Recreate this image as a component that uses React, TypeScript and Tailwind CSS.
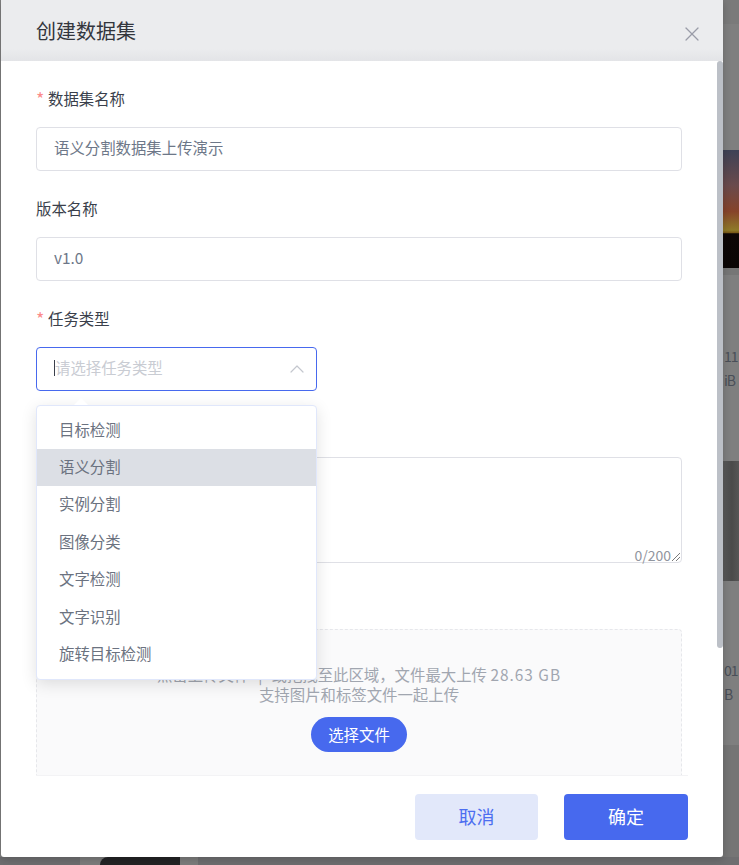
import { X, ChevronUp } from 'lucide-react';

const taskTypes = ['目标检测', '语义分割', '实例分割', '图像分类', '文字检测', '文字识别', '旋转目标检测'];

const Label = ({ text, required }: { text?: string; required?: boolean }) => (
  <div className="flex h-[22px] items-center pb-[2px] text-[15.4px] leading-[20px] text-[#3a3f4b]">
    {required && <span className="mr-[4px] w-[8px] text-[18px] text-[#fb8c8c]">*</span>}
    {text}
  </div>
);

const Field = ({ value }: { value: string }) => (
  <div className="mt-[17px] flex h-[44px] items-center rounded border border-[#dfe0e6] bg-white px-[17px] pb-[2px] text-[15.4px] text-[#6d7788]">
    {value}
  </div>
);

// the dimmed page behind the dialog, only its right and bottom edges show
const Backdrop = () => (
  <div className="absolute inset-0 bg-[#7f7f7f] text-sm leading-[22px] text-[#4a4f58]">
    <div className="ml-[723px] flex h-full flex-col">
      <div className="h-[24px] shrink-0 bg-[#7a7a7a]" />
      <div className="h-[126px] shrink-0" />
      <div className="h-[118px] shrink-0 bg-[linear-gradient(180deg,#3e4256_0%,#6a4a4c_30%,#86432a_52%,#8f7a28_68%,#7a5a18_70%,#0e0706_71%,#0b0605_100%)]" />
      <div className="h-[7px] shrink-0 bg-[#767676]" />
      <div className="h-[70px] shrink-0" />
      <div className="flex flex-col gap-[2px] pl-[1px] tracking-[-1px]">
        <span>11</span>
        <span>iB</span>
      </div>
      <div className="h-[70px] shrink-0" />
      <div className="h-[120px] shrink-0 bg-[linear-gradient(90deg,#5c5c5c,#4a4a4a_55%,#565656)]" />
      <div className="h-[78px] shrink-0" />
      <div className="flex flex-col gap-[2px] pl-[1px] tracking-[-1px]">
        <span>01</span>
        <span>B</span>
      </div>
      <div className="h-[40px] shrink-0" />
      <div className="flex-1 bg-[#757575]" />
    </div>
    <div className="absolute bottom-0 left-0 flex h-[8px] w-full">
      <div className="w-[80px] bg-[#6e6e70]" />
      <div className="w-[118px] bg-[#7c7c7c] pl-[20px]">
        <div className="h-full w-[80px] rounded-tl-[10px] bg-[#232325]" />
      </div>
      <div className="flex-1 bg-[#6e6e70]" />
    </div>
  </div>
);

const Dropdown = () => (
  <div className="absolute left-[35px] top-[344px] z-10 w-[281px]">
    <div className="absolute left-[38px] top-[-7px] h-0 w-0 border-x-[7px] border-b-[7px] border-x-transparent border-b-white" />
    <div className="h-[275px] rounded border border-[#e0e7fb] bg-white py-[5.5px] text-[15.4px] text-[#6b7280] shadow-[0_4px_16px_rgba(0,0,0,0.12)]">
      {taskTypes.map((item, idx) => (
        <div
          key={item}
          className={`flex h-[37.4px] items-center pb-[2px] pl-[22px] ${idx === 1 ? 'bg-[#dcdfe5]' : ''}`}
        >
          {item}
        </div>
      ))}
    </div>
  </div>
);

export default function App() {
  return (
    <div
      className="relative h-[865px] w-[739px] overflow-hidden"
      style={{ fontFamily: '"Noto Sans CJK SC", "Liberation Sans", sans-serif' }}
    >
      <Backdrop />

      <div className="relative ml-px flex h-[857px] w-[722px] flex-col overflow-hidden rounded-b-[3px] bg-white shadow-[0_2px_8px_rgba(0,0,0,0.2)]">
        <header className="flex h-[61px] shrink-0 items-start justify-between bg-[linear-gradient(180deg,#ebecee_80%,#e3e4e7_100%)] pl-[35px] pr-[19px]">
          <h1 className="mt-[16px] text-xl leading-[30px] text-[#33363d]">创建数据集</h1>
          <X size={24} strokeWidth={1.2} className="mt-[22px] text-[#9a9ca8]" />
        </header>

        <div className="relative min-h-0 flex-1 overflow-hidden">
          <div className="absolute right-0 top-0 z-20 h-[587px] w-[6px] rounded-[3px] bg-[#bcc0c7]" />
          <Dropdown />

          <div className="pl-[35px] pr-[41px] pt-[27px]">
            <Label text="数据集名称" required />
            <Field value="语义分割数据集上传演示" />

            <div className="mt-[27px]">
              <Label text="版本名称" />
              <Field value="v1.0" />
            </div>

            <div className="mt-[27px]">
              <Label text="任务类型" required />
              <div className="mt-[17px] flex h-[44px] w-[281px] items-center justify-between rounded border border-[#4769ee] pl-[17px] pr-[7px] text-[15.4px] text-[#c9ccd3]">
                <span className="flex items-center pb-[2px]">
                  <span className="h-[16px] w-px bg-[#3a3f4b]" />
                  请选择任务类型
                </span>
                <ChevronUp size={24} strokeWidth={1.2} className="text-[#c4c7ce]" />
              </div>
            </div>

            <div className="mt-[27px]">
              <Label />
              <div className="relative mt-[17px] h-[106px] rounded border border-[#dfe0e6]">
                <span className="absolute bottom-[-4px] right-[10px] text-sm leading-[22px] text-[#91959e]">0/200</span>
                <svg className="absolute bottom-px right-px" width="9" height="9" viewBox="0 0 9 9">
                  <path d="M1 9 9 1M5 9l4-4" stroke="#6b6b6b" strokeWidth="0.9" fill="none" />
                </svg>
              </div>
            </div>

            <div className="mt-[27px]">
              <Label />
              <div className="mt-[17px] flex h-[180px] flex-col items-center rounded border border-dashed border-[#e6e7eb] bg-[#fafafb] pt-[34px] text-[15.4px] leading-[20px] text-[#a1a6b0]">
                <p>
                  点击上传文件<span className="mx-[9px]">|</span>或拖拽至此区域，文件最大上传{' '}
                  <span className="tracking-[1px]">28.63 GB</span>
                </p>
                <p>支持图片和标签文件一起上传</p>
                <button className="mt-[13px] h-[35px] w-[96px] rounded-full bg-[#4769ee] pb-[2px] text-[15.4px] text-white">
                  选择文件
                </button>
              </div>
            </div>
          </div>
        </div>

        <footer className="ml-[35px] mr-[35px] flex h-[82px] shrink-0 items-start justify-end gap-[26px] border-t border-[#f3f3f5] pt-[18px] text-lg">
          <button className="h-[46px] w-[123px] rounded bg-[#e2e8fa] pb-[3px] text-[#4c6ef0]">取消</button>
          <button className="h-[46px] w-[124px] rounded bg-[#4769ee] pb-[3px] text-white">确定</button>
        </footer>
      </div>
    </div>
  );
}
